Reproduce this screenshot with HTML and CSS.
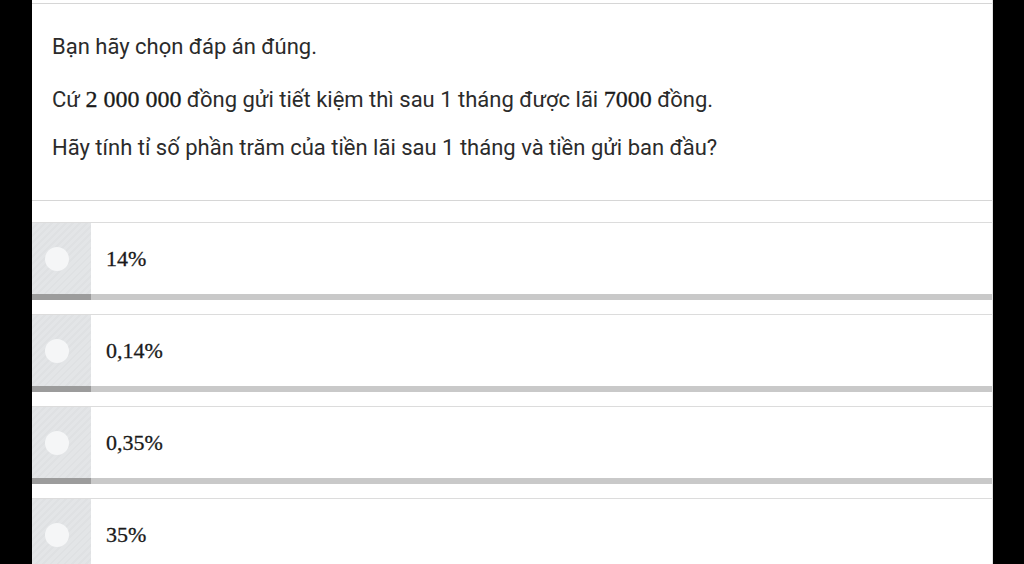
FILE: index.html
```html
<!DOCTYPE html>
<html lang="vi">
<head>
<meta charset="utf-8">
<title>Câu hỏi</title>
<link rel="stylesheet" href="styles.css">
</head>
<body>
<div class="page">
  <div class="question">
    <p class="q-line q-first">Bạn hãy chọn đáp án đúng.</p>
    <p class="q-line">Cứ <span class="math">2 000 000</span> đồng gửi tiết kiệm thì sau 1 tháng được lãi <span class="math">7000</span> đồng.</p>
    <p class="q-line">Hãy tính tỉ số phần trăm của tiền lãi sau 1 tháng và tiền gửi ban đầu?</p>
  </div>
  <div class="options">
    <div class="option">
      <div class="radio-box"><span class="radio"></span></div>
      <div class="label"><span class="math-ans">14%</span></div>
    </div>
    <div class="option">
      <div class="radio-box"><span class="radio"></span></div>
      <div class="label"><span class="math-ans">0,14%</span></div>
    </div>
    <div class="option">
      <div class="radio-box"><span class="radio"></span></div>
      <div class="label"><span class="math-ans">0,35%</span></div>
    </div>
    <div class="option">
      <div class="radio-box"><span class="radio"></span></div>
      <div class="label"><span class="math-ans">35%</span></div>
    </div>
  </div>
</div>
</body>
</html>
```
FILE: styles.css
```css
html, body {
  margin: 0;
  padding: 0;
  background: #000;
  height: 100%;
  overflow: hidden;
}

.page {
  margin: 0 31px 0 32px;
  height: 564px;
  background: #fff;
  padding-top: 3px;
  box-sizing: border-box;
  overflow: hidden;
  border-right: 1px solid #e2e2e2;
}

.question {
  border-top: 1px solid #d6d6d6;
  border-bottom: 1px solid #d6d6d6;
  height: 198px;
  box-sizing: border-box;
  padding: 30px 0 0 20px;
  font-family: Roboto, "Noto Sans", sans-serif;
  font-size: 22px;
  color: #2b2b2b;
}

.q-line {
  margin: 0 0 22px 0;
  line-height: 26px;
  white-space: nowrap;
}

.q-first {
  margin-bottom: 26px;
}

.math {
  font-family: "Liberation Serif", "DejaVu Serif", serif;
  font-size: 24px;
  color: #1a1a1a;
  -webkit-text-stroke: 0.3px #1a1a1a;
}

.options {
  padding-top: 21px;
}

.option {
  display: flex;
  border-top: 1px solid #dcdcdc;
  height: 77px;
  margin-bottom: 14px;
}

.radio-box {
  width: 59px;
  flex: none;
  display: flex;
  align-items: center;
  padding-left: 13px;
  box-sizing: border-box;
  background: repeating-linear-gradient(135deg, #e3e5e7 0 3px, #dfe1e3 3px 5px);
  border-bottom: 6px solid #9c9c9c;
}

.radio {
  width: 24px;
  height: 24px;
  border-radius: 50%;
  background: #f5f6f7;
}

.label {
  flex: 1;
  display: flex;
  align-items: center;
  padding-left: 15px;
  border-bottom: 6px solid #c9c9c9;
}

.math-ans {
  font-family: "Liberation Serif", "DejaVu Serif", serif;
  font-size: 22px;
  color: #1a1a1a;
  -webkit-text-stroke: 0.3px #1a1a1a;
}
```
